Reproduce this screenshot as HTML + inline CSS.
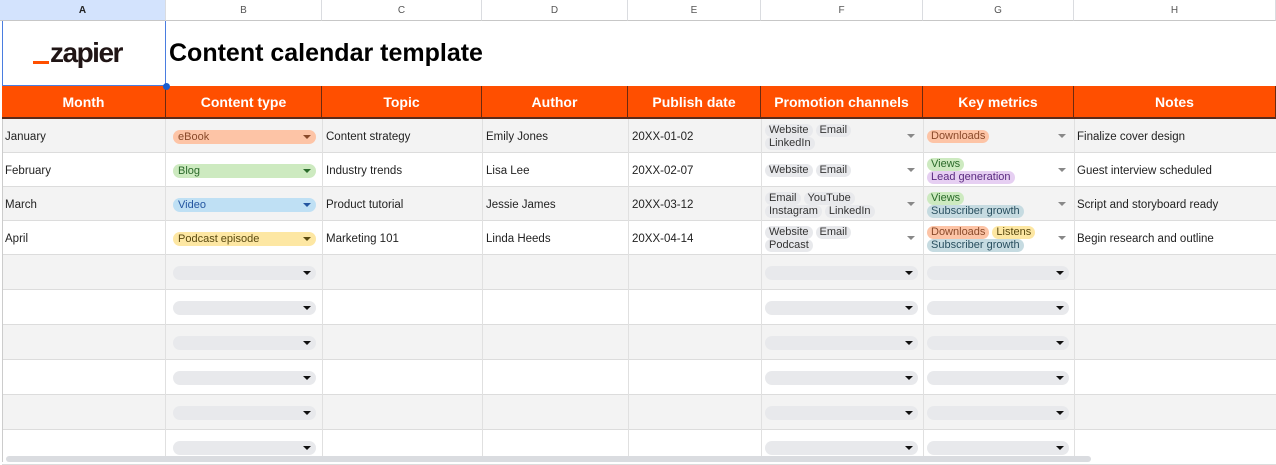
<!DOCTYPE html>
<html><head><meta charset="utf-8"><style>
*{margin:0;padding:0;box-sizing:border-box}
body{width:1276px;height:462px;overflow:hidden;background:#fff;font-family:"Liberation Sans",sans-serif;position:relative}
.a{position:absolute}
.ch{top:0;height:21px;border-right:1px solid #dadce0;border-bottom:1px solid #c7c7c7;font-size:10px;color:#555;text-align:center;line-height:21px;background:#fff}
.hd{top:86px;height:33px;background:#ff4f00;border-right:1px solid #6b2a10;border-bottom:2px solid #5a2a1a;color:#fff;font-weight:bold;font-size:14px;text-align:center;line-height:32px}
.row{left:2px;width:1274px;border-bottom:1px solid #dcdcdc}
.vl{width:1px;background:#e0e0e0;top:119px;height:343px}
.t{font-size:11.5px;color:#222;line-height:14px;white-space:nowrap}
.pill{height:14px;border-radius:7px;font-size:11px;line-height:14px;padding-left:5px;white-space:nowrap}
.cc{line-height:13px;white-space:nowrap}
.chip{display:inline-block;background:#e8e9ec;border-radius:7px;font-size:11px;line-height:13px;padding:0 4px;margin-right:3px;color:#333;vertical-align:top}
.arr{width:0;height:0;border-left:4px solid transparent;border-right:4px solid transparent;border-top:4px solid #333}
.ga{border-top-color:#888}
</style></head><body>
<div class="a ch" style="left:0;width:166px;background:#d3e3fd;color:#222;font-weight:bold">A</div>
<div class="a ch" style="left:166px;width:156px">B</div>
<div class="a ch" style="left:322px;width:160px">C</div>
<div class="a ch" style="left:482px;width:146px">D</div>
<div class="a ch" style="left:628px;width:133px">E</div>
<div class="a ch" style="left:761px;width:162px">F</div>
<div class="a ch" style="left:923px;width:151px">G</div>
<div class="a ch" style="left:1074px;width:202px">H</div>
<div class="a" style="left:2px;top:21px;width:164px;height:65px;border:1px solid #4a7de0;border-top:none"></div>
<div class="a" style="left:33px;top:61px;width:16px;height:3px;background:#ff4f00"></div>
<div class="a" style="left:50px;top:37px;font-size:28px;font-weight:bold;color:#201515;letter-spacing:-1.5px">zapier</div>
<div class="a" style="left:169px;top:39px;font-size:25px;font-weight:bold;color:#000">Content calendar template</div>
<div class="a hd" style="left:2px;width:164px">Month</div>
<div class="a hd" style="left:166px;width:156px">Content type</div>
<div class="a hd" style="left:322px;width:160px">Topic</div>
<div class="a hd" style="left:482px;width:146px">Author</div>
<div class="a hd" style="left:628px;width:133px">Publish date</div>
<div class="a hd" style="left:761px;width:162px">Promotion channels</div>
<div class="a hd" style="left:923px;width:151px">Key metrics</div>
<div class="a hd" style="left:1074px;width:202px">Notes</div>
<div class="a" style="left:163px;top:83px;width:7px;height:7px;border-radius:50%;background:#1a5fd0"></div>
<div class="a row" style="top:119px;height:34px;background:#f3f3f3"></div>
<div class="a row" style="top:153px;height:34px"></div>
<div class="a row" style="top:187px;height:34px;background:#f3f3f3"></div>
<div class="a row" style="top:221px;height:34px"></div>
<div class="a row" style="top:255px;height:35px;background:#f3f3f3"></div>
<div class="a row" style="top:290px;height:35px"></div>
<div class="a row" style="top:325px;height:35px;background:#f3f3f3"></div>
<div class="a row" style="top:360px;height:35px"></div>
<div class="a row" style="top:395px;height:35px;background:#f3f3f3"></div>
<div class="a row" style="top:430px;height:35px"></div>
<div class="a vl" style="left:2px;background:#ccc"></div>
<div class="a vl" style="left:165px"></div><div class="a vl" style="left:322px"></div><div class="a vl" style="left:482px"></div><div class="a vl" style="left:628px"></div><div class="a vl" style="left:761px"></div><div class="a vl" style="left:923px"></div><div class="a vl" style="left:1074px"></div>

<div class="a t" style="left:5px;top:130px">January</div>
<div class="a t" style="left:5px;top:164px">February</div>
<div class="a t" style="left:5px;top:198px">March</div>
<div class="a t" style="left:5px;top:232px">April</div>
<div class="a pill" style="left:173px;top:130px;width:143px;background:#fdc4a6;color:#8a4a2a">eBook</div>
<div class="a pill" style="left:173px;top:164px;width:143px;background:#cdeac0;color:#2a6a2a">Blog</div>
<div class="a pill" style="left:173px;top:198px;width:143px;background:#bfe0f4;color:#2456a0">Video</div>
<div class="a pill" style="left:173px;top:232px;width:143px;background:#fde7a3;color:#5a4a10">Podcast episode</div>
<div class="a arr" style="left:303px;top:135px;border-top-color:#8a4a2a"></div>
<div class="a arr" style="left:303px;top:169px;border-top-color:#2a6a2a"></div>
<div class="a arr" style="left:303px;top:203px;border-top-color:#2456a0"></div>
<div class="a arr" style="left:303px;top:237px;border-top-color:#5a4a10"></div>
<div class="a t" style="left:326px;top:130px">Content strategy</div>
<div class="a t" style="left:326px;top:164px">Industry trends</div>
<div class="a t" style="left:326px;top:198px">Product tutorial</div>
<div class="a t" style="left:326px;top:232px">Marketing 101</div>
<div class="a t" style="left:486px;top:130px">Emily Jones</div>
<div class="a t" style="left:486px;top:164px">Lisa Lee</div>
<div class="a t" style="left:486px;top:198px">Jessie James</div>
<div class="a t" style="left:486px;top:232px">Linda Heeds</div>
<div class="a t" style="left:632px;top:130px">20XX-01-02</div>
<div class="a t" style="left:632px;top:164px">20XX-02-07</div>
<div class="a t" style="left:632px;top:198px">20XX-03-12</div>
<div class="a t" style="left:632px;top:232px">20XX-04-14</div>
<div class="a cc" style="left:765px;top:124px"><span class="chip">Website</span><span class="chip">Email</span><br><span class="chip">LinkedIn</span></div>
<div class="a cc" style="left:765px;top:164px"><span class="chip">Website</span><span class="chip">Email</span></div>
<div class="a cc" style="left:765px;top:192px"><span class="chip">Email</span><span class="chip">YouTube</span><br><span class="chip">Instagram</span><span class="chip">LinkedIn</span></div>
<div class="a cc" style="left:765px;top:226px"><span class="chip">Website</span><span class="chip">Email</span><br><span class="chip">Podcast</span></div>
<div class="a cc" style="left:927px;top:130px"><span class="chip" style="background:#fdc4a6;color:#8a4a2a">Downloads</span></div>
<div class="a cc" style="left:927px;top:158px"><span class="chip" style="background:#cdeac0;color:#2a6a2a">Views</span><br><span class="chip" style="background:#e6cff2;color:#5a2a80">Lead generation</span></div>
<div class="a cc" style="left:927px;top:192px"><span class="chip" style="background:#cdeac0;color:#2a6a2a">Views</span><br><span class="chip" style="background:#c6dbe1;color:#2a5060">Subscriber growth</span></div>
<div class="a cc" style="left:927px;top:226px"><span class="chip" style="background:#fdc4a6;color:#8a4a2a">Downloads</span><span class="chip" style="background:#fde7a3;color:#5a4a10">Listens</span><br><span class="chip" style="background:#c6dbe1;color:#2a5060">Subscriber growth</span></div>
<div class="a arr ga" style="left:907px;top:134px"></div><div class="a arr ga" style="left:907px;top:168px"></div><div class="a arr ga" style="left:907px;top:202px"></div><div class="a arr ga" style="left:907px;top:236px"></div>
<div class="a arr ga" style="left:1058px;top:134px"></div><div class="a arr ga" style="left:1058px;top:168px"></div><div class="a arr ga" style="left:1058px;top:202px"></div><div class="a arr ga" style="left:1058px;top:236px"></div>
<div class="a t" style="left:1077px;top:130px">Finalize cover design</div>
<div class="a t" style="left:1077px;top:164px">Guest interview scheduled</div>
<div class="a t" style="left:1077px;top:198px">Script and storyboard ready</div>
<div class="a t" style="left:1077px;top:232px">Begin research and outline</div>

<div id="empties"></div>
<script>
var h='';[266,301,336,371,406,441].forEach(function(y){
[[173,143],[765,153],[927,142]].forEach(function(c){
h+='<div class="a pill" style="left:'+c[0]+'px;top:'+y+'px;width:'+c[1]+'px;background:#e8e9ec"></div>';
h+='<div class="a arr" style="left:'+(c[0]+c[1]-13)+'px;top:'+(y+5)+'px;border-top-color:#111"></div>';});});
document.getElementById('empties').innerHTML=h;
</script>
<div class="a" style="left:6px;top:456px;width:1085px;height:6px;border-radius:3px;background:#dadce0"></div>
</body></html>
